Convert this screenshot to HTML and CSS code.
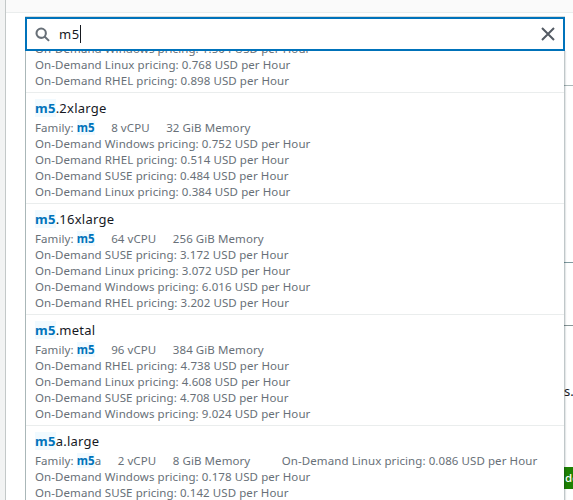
FILE: index.html
```html
<!DOCTYPE html>
<html lang="en">
<head>
<meta charset="utf-8">
<title>Instance type</title>
<link rel="stylesheet" href="styles.css">
</head>
<body>
<div class="page">
  <div class="gutter"></div>
  <div class="panel">
    <div class="panel-head"></div>
    <div class="backdrop">
      <div class="rule rule-soft"></div>
      <div class="rule rule-teal"></div>
      <div class="rule"></div>
      <p class="note">s.</p>
      <div class="action">de</div>
    </div>
  </div>
</div>
<div class="select">
  <div class="search">
    <svg class="icon-search" viewBox="0 0 16 16"><circle cx="6.6" cy="6.6" r="5"/><path d="M10.2 10.2L15 14.8"/></svg>
    <span class="query">m5</span><span class="caret"></span>
    <svg class="icon-close" viewBox="0 0 14 14"><path d="M1 1L13 13M13 1L1 13"/></svg>
  </div>
  <div class="options">
    <div class="option option-cut">
      <div class="line">On-Demand Windows pricing: 1.504 USD per Hour</div>
      <div class="line">On-Demand Linux pricing: 0.768 USD per Hour</div>
      <div class="line">On-Demand RHEL pricing: 0.898 USD per Hour</div>
    </div>
    <div class="option">
      <div class="title"><mark>m5</mark>.2xlarge</div>
      <div class="line tags"><span>Family: <mark>m5</mark></span><span>8 vCPU</span><span>32 GiB Memory</span></div>
      <div class="line">On-Demand Windows pricing: 0.752 USD per Hour</div>
      <div class="line">On-Demand RHEL pricing: 0.514 USD per Hour</div>
      <div class="line">On-Demand SUSE pricing: 0.484 USD per Hour</div>
      <div class="line">On-Demand Linux pricing: 0.384 USD per Hour</div>
    </div>
    <div class="option">
      <div class="title"><mark>m5</mark>.16xlarge</div>
      <div class="line tags"><span>Family: <mark>m5</mark></span><span>64 vCPU</span><span>256 GiB Memory</span></div>
      <div class="line">On-Demand SUSE pricing: 3.172 USD per Hour</div>
      <div class="line">On-Demand Linux pricing: 3.072 USD per Hour</div>
      <div class="line">On-Demand Windows pricing: 6.016 USD per Hour</div>
      <div class="line">On-Demand RHEL pricing: 3.202 USD per Hour</div>
    </div>
    <div class="option">
      <div class="title"><mark>m5</mark>.metal</div>
      <div class="line tags"><span>Family: <mark>m5</mark></span><span>96 vCPU</span><span>384 GiB Memory</span></div>
      <div class="line">On-Demand RHEL pricing: 4.738 USD per Hour</div>
      <div class="line">On-Demand Linux pricing: 4.608 USD per Hour</div>
      <div class="line">On-Demand SUSE pricing: 4.708 USD per Hour</div>
      <div class="line">On-Demand Windows pricing: 9.024 USD per Hour</div>
    </div>
    <div class="option">
      <div class="title"><mark>m5</mark>a.large</div>
      <div class="line tags"><span>Family: <mark>m5</mark>a</span><span>2 vCPU</span><span>8 GiB Memory</span><span class="far">On-Demand Linux pricing: 0.086 USD per Hour</span></div>
      <div class="line">On-Demand Windows pricing: 0.178 USD per Hour</div>
      <div class="line">On-Demand SUSE pricing: 0.142 USD per Hour</div>
    </div>
  </div>
</div>
</body>
</html>
```

FILE: styles.css
```css
* { box-sizing: border-box; }
body {
  margin: 0;
  height: 500px;
  overflow: hidden;
  position: relative;
  background: #fff;
  color: #16191f;
  font-family: "Noto Sans", "Open Sans", sans-serif;
  font-size: 13px;
}
.page { display: flex; height: 500px; }
.gutter { width: 6px; background: #f2f3f3; border-right: 1px solid #c3c8c8; }
.panel { flex: 1; min-width: 0; }
.panel-head { height: 13px; background: #fafafa; border-bottom: 1px solid #eaeded; }
.backdrop { margin-left: 558px; }
.rule { height: 1px; margin-bottom: 62px; background: #879596; }
.rule-soft { margin-top: 72px; margin-bottom: 176px; background: #aab7b8; }
.rule-teal { background: #7f9a9f; }
.note { margin: -8px 0 0; height: 22px; line-height: 22px; font-size: 13px; }
.action {
  margin-top: 65px;
  padding-left: 1px;
  height: 22px;
  line-height: 22px;
  overflow: hidden;
  background: #1d8102;
  color: #fff;
  font-size: 11.5px;
  font-weight: 500;
}
.select {
  position: absolute;
  left: 25px;
  top: 16px;
  width: 540px;
  height: 484px;
  display: flex;
  flex-direction: column;
  border-top: 1px solid #d5dbdb;
}
.search {
  flex: none;
  height: 34px;
  display: flex;
  align-items: center;
  padding: 0 8px;
  background: #fff;
  border: 2px solid #0073bb;
}
.icon-search { width: 15px; height: 15px; fill: none; stroke: #687078; stroke-width: 2.2; }
.query { margin-left: 9px; line-height: 22px; letter-spacing: .6px; }
.caret { width: 1px; height: 18px; background: #16191f; }
.icon-close { width: 14px; height: 14px; margin-left: auto; fill: none; stroke: #545b64; stroke-width: 2; }
.options {
  flex: 1;
  min-height: 0;
  overflow: hidden;
  background: #fff;
  background-clip: padding-box;
  border-left: 1px solid #aab7b8;
  border-right: 1px solid rgba(0, 28, 36, .16);
  box-shadow: 1px 0 1px rgba(0, 28, 36, .1);
}
.option { height: 111px; padding: 4px 9px 4px; border-bottom: 1px solid #eaeded; }
.option-cut { height: 42px; padding-top: 0; overflow: hidden; }
.option-cut .line:first-child { margin-top: -10px; }
.title { height: 22px; margin-bottom: 1px; line-height: 22px; letter-spacing: .25px; white-space: nowrap; }
.line { height: 16px; line-height: 16px; font-size: 11.5px; letter-spacing: .08px; color: #687078; white-space: nowrap; }
.tags { display: flex; gap: 16.5px; }
.far { margin-left: 15px; }
mark { background: #f1faff; color: #0073bb; font-weight: 700; }
```
